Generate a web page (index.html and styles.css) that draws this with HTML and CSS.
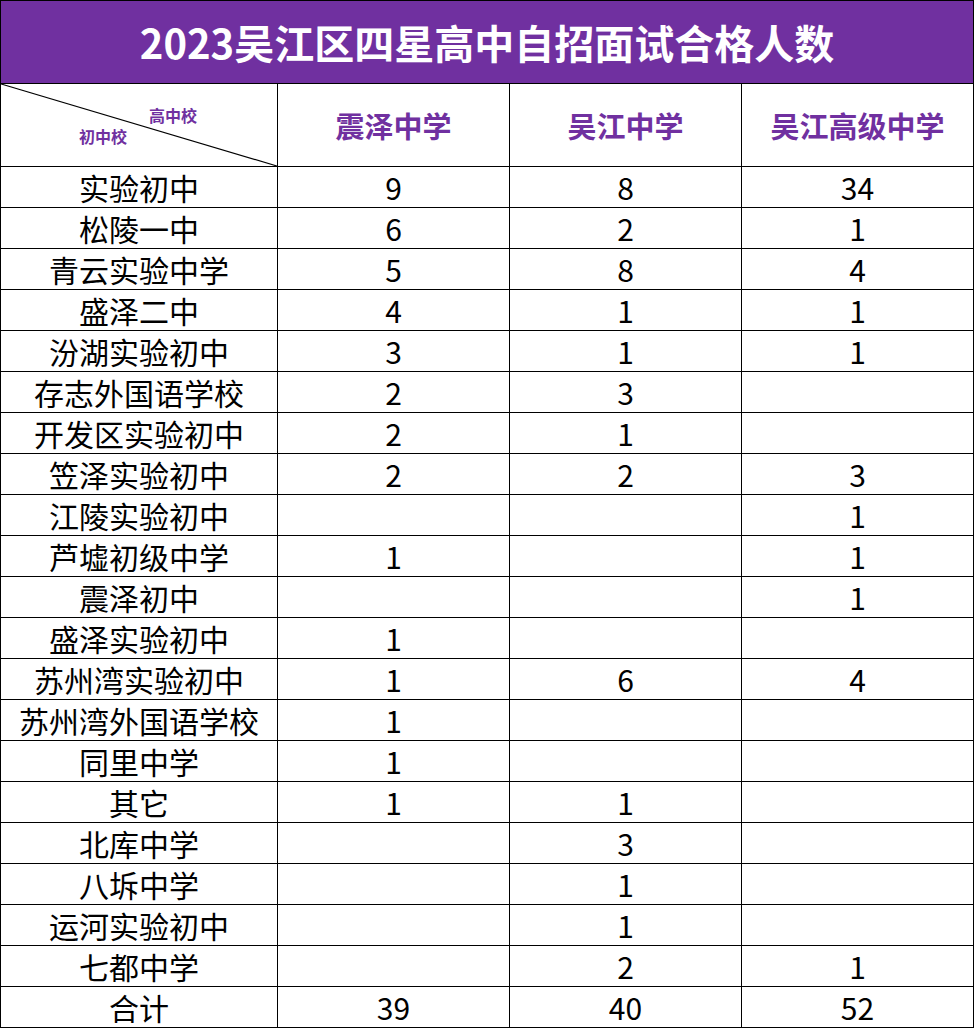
FILE: index.html
```html
<!DOCTYPE html>
<html lang="zh">
<head>
<meta charset="utf-8">
<link rel="stylesheet" href="styles.css">
</head>
<body>
<table class="sheet">
  <colgroup>
    <col class="c-name"><col class="c-num"><col class="c-num"><col class="c-num">
  </colgroup>
  <tr class="title-row"><td colspan="4" class="title">2023吴江区四星高中自招面试合格人数</td></tr>
  <tr class="head-row">
    <td class="diag">
      <svg class="diag-line" viewBox="0 0 277 83" preserveAspectRatio="none"><line x1="0" y1="0" x2="277" y2="83" stroke="#000" stroke-width="1.2"/></svg>
      <span class="lab-top">高中校</span>
      <span class="lab-bot">初中校</span>
    </td>
    <td class="head">震泽中学</td>
    <td class="head">吴江中学</td>
    <td class="head">吴江高级中学</td>
  </tr>
  <tr><td>实验初中</td><td>9</td><td>8</td><td>34</td></tr>
  <tr><td>松陵一中</td><td>6</td><td>2</td><td>1</td></tr>
  <tr><td>青云实验中学</td><td>5</td><td>8</td><td>4</td></tr>
  <tr><td>盛泽二中</td><td>4</td><td>1</td><td>1</td></tr>
  <tr><td>汾湖实验初中</td><td>3</td><td>1</td><td>1</td></tr>
  <tr><td>存志外国语学校</td><td>2</td><td>3</td><td></td></tr>
  <tr><td>开发区实验初中</td><td>2</td><td>1</td><td></td></tr>
  <tr><td>笠泽实验初中</td><td>2</td><td>2</td><td>3</td></tr>
  <tr><td>江陵实验初中</td><td></td><td></td><td>1</td></tr>
  <tr><td>芦墟初级中学</td><td>1</td><td></td><td>1</td></tr>
  <tr><td>震泽初中</td><td></td><td></td><td>1</td></tr>
  <tr><td>盛泽实验初中</td><td>1</td><td></td><td></td></tr>
  <tr><td>苏州湾实验初中</td><td>1</td><td>6</td><td>4</td></tr>
  <tr><td>苏州湾外国语学校</td><td>1</td><td></td><td></td></tr>
  <tr><td>同里中学</td><td>1</td><td></td><td></td></tr>
  <tr><td>其它</td><td>1</td><td>1</td><td></td></tr>
  <tr><td>北库中学</td><td></td><td>3</td><td></td></tr>
  <tr><td>八坼中学</td><td></td><td>1</td><td></td></tr>
  <tr><td>运河实验初中</td><td></td><td>1</td><td></td></tr>
  <tr><td>七都中学</td><td></td><td>2</td><td>1</td></tr>
  <tr><td>合计</td><td>39</td><td>40</td><td>52</td></tr>
</table>
</body>
</html>
```

FILE: styles.css
```css
html, body {
  margin: 0;
  padding: 0;
  background: #fff;
}
.sheet {
  width: 974px;
  border-collapse: collapse;
  table-layout: fixed;
  font-family: "Noto Sans CJK SC", "Noto Sans", sans-serif;
  color: #000;
}
.c-name { width: 277px; }
.c-num { width: 232px; }
.sheet td {
  border: 1px solid #000;
  padding: 0;
  height: 40px;
  text-align: center;
  vertical-align: middle;
  font-size: 30px;
  line-height: 40px;
  white-space: nowrap;
}
.title-row td.title {
  height: 82px;
  background: #7030a0;
  color: #fff;
  font-size: 40px;
  font-weight: bold;
  line-height: 82px;
}
.head-row td {
  height: 82px;
}
.head-row td.head {
  color: #7030a0;
  font-size: 29px;
  font-weight: bold;
}
td.diag {
  position: relative;
}
.diag-line {
  position: absolute;
  left: 0;
  top: 0;
  width: 100%;
  height: 100%;
}
.lab-top, .lab-bot {
  position: absolute;
  font-size: 16px;
  line-height: 18px;
  font-weight: bold;
  color: #7030a0;
}
.lab-top { left: 148px; top: 22px; }
.lab-bot { left: 78px; top: 43px; }
```
